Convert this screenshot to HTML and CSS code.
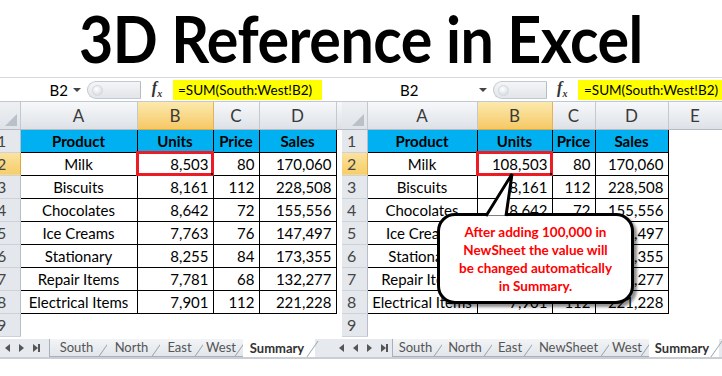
FILE: index.html
```html
<!DOCTYPE html>
<html lang="en">
  <head>
    <meta charset="UTF-8" />
    <title>3D Reference in Excel</title>
    <link rel="stylesheet" href="styles.css">
  </head>
  <body>
    <h1 class="title"><span class="title-text">3D Reference in Excel</span></h1>

    <div class="panes">
      <!-- Summary sheet before the change -->
      <section class="pane pane-left">
        <div class="fbar">
          <div class="namebox"><span class="ref">B2</span><span class="caret"></span></div>
          <div class="knob"></div>
          <div class="fx"><i>f<sub>x</sub></i></div>
          <div class="formula">=SUM(South:West!B2)</div>
        </div>

        <table class="sheet">
          <colgroup>
            <col style="width:20px"><col style="width:117px"><col style="width:76px">
            <col style="width:46px"><col style="width:77px"><col style="width:6px">
          </colgroup>
          <tr class="colhead">
            <th class="corner"></th><th>A</th><th class="on">B</th><th>C</th><th>D</th><th></th>
          </tr>
          <tr><th class="rh">1</th><td class="hd">Product</td><td class="hd">Units</td><td class="hd">Price</td><td class="hd">Sales</td><td class="blank"></td></tr>
          <tr><th class="rh on">2</th><td class="name">Milk</td><td class="num sel">8,503</td><td class="num">80</td><td class="num">170,060</td><td class="blank"></td></tr>
          <tr><th class="rh">3</th><td class="name">Biscuits</td><td class="num">8,161</td><td class="num">112</td><td class="num">228,508</td><td class="blank"></td></tr>
          <tr><th class="rh">4</th><td class="name">Chocolates</td><td class="num">8,642</td><td class="num">72</td><td class="num">155,556</td><td class="blank"></td></tr>
          <tr><th class="rh">5</th><td class="name">Ice Creams</td><td class="num">7,763</td><td class="num">76</td><td class="num">147,497</td><td class="blank"></td></tr>
          <tr><th class="rh">6</th><td class="name">Stationary</td><td class="num">8,255</td><td class="num">84</td><td class="num">173,355</td><td class="blank"></td></tr>
          <tr><th class="rh">7</th><td class="name">Repair Items</td><td class="num">7,781</td><td class="num">68</td><td class="num">132,277</td><td class="blank"></td></tr>
          <tr><th class="rh">8</th><td class="name">Electrical Items</td><td class="num">7,901</td><td class="num">112</td><td class="num">221,228</td><td class="blank"></td></tr>
          <tr><th class="rh">9</th><td class="blank"></td><td class="blank"></td><td class="blank"></td><td class="blank"></td><td class="blank"></td></tr>
        </table>

        <div class="tabs">
          <div class="nav"><span class="tri left"></span><span class="tri right"></span><span class="tri right end"></span></div>
          <span class="tab" style="width:58px">South</span>
          <span class="tab" style="width:53px">North</span>
          <span class="tab" style="width:43px">East</span>
          <span class="tab" style="width:40px">West</span>
          <span class="tab active" style="width:72px">Summary</span>
        </div>
      </section>

      <!-- Summary sheet after NewSheet was added -->
      <section class="pane pane-right">
        <div class="fbar">
          <div class="namebox wide"><span class="ref">B2</span><span class="caret"></span></div>
          <div class="knob"></div>
          <div class="fx"><i>f<sub>x</sub></i></div>
          <div class="formula">=SUM(South:West!B2)</div>
        </div>

        <table class="sheet">
          <colgroup>
            <col style="width:25px"><col style="width:110px"><col style="width:75px">
            <col style="width:43px"><col style="width:73px"><col style="width:54px">
          </colgroup>
          <tr class="colhead">
            <th class="corner"></th><th>A</th><th class="on">B</th><th>C</th><th>D</th><th>E</th>
          </tr>
          <tr><th class="rh">1</th><td class="hd">Product</td><td class="hd">Units</td><td class="hd">Price</td><td class="hd">Sales</td><td class="blank"></td></tr>
          <tr><th class="rh on">2</th><td class="name">Milk</td><td class="num sel">108,503</td><td class="num">80</td><td class="num">170,060</td><td class="blank"></td></tr>
          <tr><th class="rh">3</th><td class="name">Biscuits</td><td class="num">8,161</td><td class="num">112</td><td class="num">228,508</td><td class="blank"></td></tr>
          <tr><th class="rh">4</th><td class="name">Chocolates</td><td class="num">8,642</td><td class="num">72</td><td class="num">155,556</td><td class="blank"></td></tr>
          <tr><th class="rh">5</th><td class="name">Ice Creams</td><td class="num">7,763</td><td class="num">76</td><td class="num">147,497</td><td class="blank"></td></tr>
          <tr><th class="rh">6</th><td class="name">Stationary</td><td class="num">8,255</td><td class="num">84</td><td class="num">173,355</td><td class="blank"></td></tr>
          <tr><th class="rh">7</th><td class="name">Repair Items</td><td class="num">7,781</td><td class="num">68</td><td class="num">132,277</td><td class="blank"></td></tr>
          <tr><th class="rh">8</th><td class="name">Electrical Items</td><td class="num">7,901</td><td class="num">112</td><td class="num">221,228</td><td class="blank"></td></tr>
          <tr><th class="rh">9</th><td class="blank"></td><td class="blank"></td><td class="blank"></td><td class="blank"></td><td class="blank"></td></tr>
        </table>

        <div class="tabs">
          <div class="nav wide"><span class="tri left first"></span><span class="tri left"></span><span class="tri right"></span><span class="tri right end"></span></div>
          <span class="tab" style="width:50px">South</span>
          <span class="tab" style="width:50px">North</span>
          <span class="tab" style="width:40px">East</span>
          <span class="tab" style="width:77px">NewSheet</span>
          <span class="tab" style="width:40px">West</span>
          <span class="tab active" style="width:70px">Summary</span>
        </div>

        <!-- callout over the sheet -->
        <div class="callout">
          After adding 100,000 in<br>
          NewSheet the value will<br>
          be changed automatically<br>
          in Summary.
        </div>
        <svg class="tail" width="40" height="50" viewBox="0 0 40 50">
          <polygon points="30,3 4,44.5 24,44.5" fill="#fff" />
          <polyline points="4,45 30,3 24,45" fill="none" stroke="#000" stroke-width="3" stroke-linejoin="miter" />
        </svg>
      </section>
    </div>
  </body>
</html>
```

FILE: styles.css
```css
body {
  margin: 0;
  width: 722px;
  height: 376px;
  overflow: hidden;
  background: #fff;
  color: #000;
  font-family: Lato, "Open Sans", sans-serif;
}

.title {
  margin: 0;
  height: 77px;
  display: flex;
  align-items: center;
  justify-content: center;
  font-family: Lato, sans-serif;
  font-weight: 700;
  font-size: 65px;
  line-height: 1;
  letter-spacing: -0.5px;
}
.title-text {
  display: inline-block;
  transform: scaleX(0.91);
  white-space: nowrap;
}

.panes {
  display: flex;
}
.pane {
  position: relative;
}
.pane-left {
  width: 342px;
  overflow: hidden;
}
.pane-right {
  width: 380px;
}

/* formula bar */
.fbar {
  height: 23px;
  display: flex;
  align-items: center;
  border-top: 1px solid #d6dae0;
  border-bottom: 1px solid #c2c8cf;
  font-size: 15px;
}
.namebox {
  width: 87px;
  display: flex;
  align-items: center;
  justify-content: flex-end;
  gap: 5px;
  padding-right: 6px;
  box-sizing: border-box;
}
.namebox.wide {
  width: 153px;
  justify-content: space-between;
  padding-left: 58px;
}
.caret {
  width: 0;
  height: 0;
  border-left: 4px solid transparent;
  border-right: 4px solid transparent;
  border-top: 4px solid #444;
}
.knob {
  width: 54px;
  height: 18px;
  box-sizing: border-box;
  border: 1px solid #c4c9cf;
  border-right: 1px solid #b5bbc3;
  border-radius: 10px 0 0 10px;
  background: linear-gradient(#f4f5f7, #e2e5e9);
  position: relative;
}
.knob::before {
  content: "";
  position: absolute;
  left: 4px;
  top: 3px;
  width: 9px;
  height: 9px;
  border-radius: 50%;
  background: radial-gradient(circle at 40% 35%, #fff, #cfd4da);
  border: 1px solid #d5d9de;
}
.fx {
  width: 32px;
  text-align: center;
  font-family: "Liberation Serif", serif;
  font-size: 16px;
  font-weight: 700;
  color: #333;
}
.fx sub {
  font-size: 10px;
}
.formula {
  height: 20px;
  line-height: 20px;
  background: #ffff00;
  padding: 0 5px;
  white-space: nowrap;
  width: 149px;
  box-sizing: border-box;
  font-size: 13.5px;
}
.pane-right .formula {
  width: 144px;
  padding-left: 6px;
}

/* sheet grid */
.sheet {
  border-collapse: collapse;
  table-layout: fixed;
  width: 100%;
  font-size: 15px;
}
.sheet tr {
  height: 23px;
}
.sheet th,
.sheet td {
  padding: 0 4px;
  white-space: nowrap;
  overflow: hidden;
}
.colhead {
  height: 27px !important;
}
.colhead th {
  height: 26px;
  font-weight: 400;
  font-size: 17px;
  color: #3a3a3a;
  background: linear-gradient(#f7f8fa, #dde1e6);
  border-right: 1px solid #c3c9d0;
  border-bottom: 1px solid #b4bbc4;
}
.colhead th.on {
  background: linear-gradient(#fbe9ae, #f6c865);
  border-bottom: 1px solid #e2a73a;
  border-right: 1px solid #e2b35c;
}
.colhead th.corner {
  position: relative;
  background: linear-gradient(#eef0f3, #dfe3e8);
}
.corner::after {
  content: "";
  position: absolute;
  right: 3px;
  bottom: 3px;
  border-left: 12px solid transparent;
  border-bottom: 12px solid #b9c0c8;
}
.rh {
  font-weight: 400;
  font-size: 16px;
  color: #454545;
  text-align: left;
  background: #e4e8ed;
  border-right: 1px solid #b7bec7;
  border-bottom: 1px solid #cdd2d8;
}
.pane-left .rh {
  padding-left: 0;
  text-indent: -3px;
}
.pane-right .rh {
  padding-left: 5px;
}
.rh.on {
  background: linear-gradient(#fbe3a0, #f6cd68);
  border-right: 1px solid #e2a73a;
}
.hd {
  background: #00b0f0;
  font-weight: 700;
  font-size: 15px;
  text-align: center;
  border: 1px solid #000;
}
.name {
  text-align: center;
  border: 1px solid #000;
}
.num {
  text-align: right;
  border: 1px solid #000;
}
.blank {
  border: none;
  background: #fff;
}
.sel {
  position: relative;
  outline: 3px solid #ec1c24;
  outline-offset: -2px;
}
.sel::after {
  content: "";
  position: absolute;
  right: -2px;
  bottom: -2px;
  width: 4px;
  height: 4px;
  background: #000;
}

/* sheet tabs */
.tabs {
  height: 18px;
  margin-top: 2px;
  display: flex;
  align-items: stretch;
  background: #e6e9ed;
  border-bottom: 2px solid #c9ced5;
  font-size: 13px;
  color: #555;
}
.nav {
  width: 49px;
  display: flex;
  align-items: center;
  gap: 9px;
  padding-left: 5px;
  box-sizing: border-box;
}
.nav.wide {
  width: 53px;
  padding-left: 0;
  margin-left: -3px;
}
.tri {
  width: 0;
  height: 0;
  border-top: 4px solid transparent;
  border-bottom: 4px solid transparent;
}
.tri.left {
  border-right: 5px solid #555;
}
.tri.right {
  border-left: 5px solid #555;
}
.tri.end {
  box-shadow: 2px 0 0 #555;
}
.tab {
  position: relative;
  display: flex;
  align-items: center;
  justify-content: center;
  padding-right: 4px;
  box-sizing: border-box;
  white-space: nowrap;
  background: linear-gradient(#f2f4f6, #e2e6eb);
  border-bottom: 1px solid #a9b0b9;
}
.tab:first-of-type {
  border-left: 1px solid #a9b0b9;
}
.tab::after {
  content: "";
  position: absolute;
  right: 2px;
  top: 2px;
  bottom: 0;
  width: 1px;
  background: #98a0aa;
  transform: skewX(-35deg);
}
.tab.active {
  background: #fff;
  font-weight: 700;
  color: #333;
  border-bottom: none;
}

/* callout */
.callout {
  position: absolute;
  left: 95px;
  top: 136px;
  width: 197px;
  height: 91px;
  box-sizing: border-box;
  border: 3px solid #000;
  border-radius: 18px;
  background: #fff;
  box-shadow: 3px 3px 3px rgba(0, 0, 0, 0.45);
  display: flex;
  align-items: center;
  justify-content: center;
  text-align: center;
  color: #ff0000;
  font-weight: 700;
  font-size: 13.5px;
  line-height: 18px;
}
.tail {
  position: absolute;
  left: 140px;
  top: 94px;
}
```
